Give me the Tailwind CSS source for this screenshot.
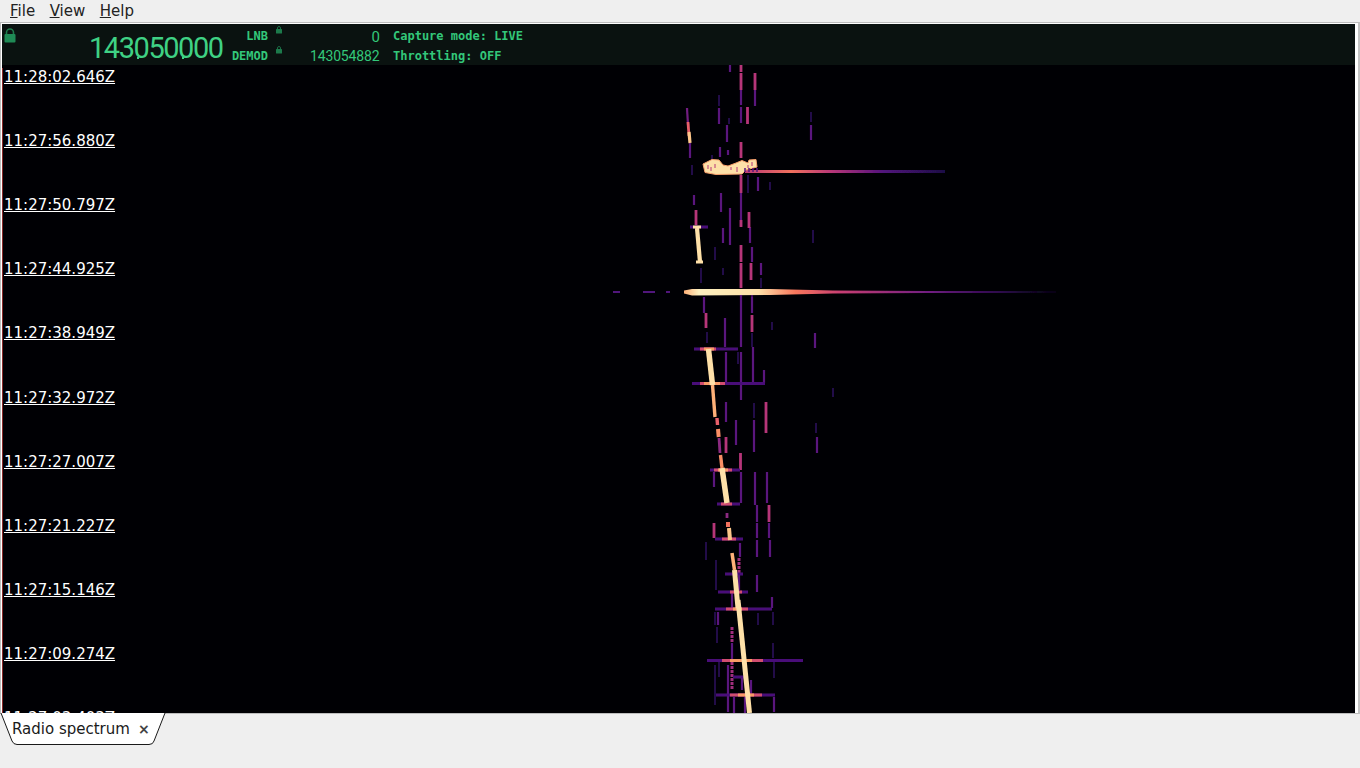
<!DOCTYPE html>
<html>
<head>
<meta charset="utf-8">
<script src="https://cdn.jsdelivr.net/npm/@tailwindcss/browser@4"></script>
</head>
<body class="w-[1360px] h-[768px] overflow-hidden bg-[#efefef] font-['DejaVu_Sans',sans-serif] text-[#1a1a1a]">
<div class="flex flex-col h-[768px]">
  <nav class="flex h-[22px] shrink-0 items-center gap-[14.500px] pl-[10px] text-[15px] leading-[20px] text-[#222]">
    <span><u>F</u>ile</span><span><u>V</u>iew</span><span><u>H</u>elp</span>
  </nav>
  <main class="flex flex-col h-[692px] shrink-0 border-t border-t-[#bdbdbd] border-r-2 border-r-[#c4c4c4] border-l border-l-[#bdbdbd] border-b border-b-[#bdbdbd] bg-white pt-px pl-px pr-[3px]">
    <header class="relative flex h-[41px] shrink-0 bg-[#0a1210] text-[#33c77a] font-['DejaVu_Sans_Mono',monospace] font-bold text-[12px]">
      <svg class="absolute left-[2px] top-[4px]" width="12" height="15" viewBox="0 0 12 15"><path d="M2.500 7V4.500a3.500 3.500 0 0 1 7 0V7" fill="none" stroke="#1f7a4c" stroke-width="1.600"/><rect x="0.500" y="6" width="11" height="8.500" rx="1" fill="#1f8a55"/></svg>
      <span class="absolute left-[87px] top-[9px] font-['Roboto',sans-serif] font-normal text-[29px] leading-[30px] tracking-[-1.450px] text-[#3fd184]">143050000</span>
      <span class="absolute left-[135px] top-[33px] h-[2px] w-[2px] bg-[#3fd184]"></span>
      <span class="absolute left-[180px] top-[33px] h-[2px] w-[2px] bg-[#3fd184]"></span>
      <span class="absolute right-[1087px] top-[5px] leading-[15px]">LNB</span>
      <span class="absolute right-[1087px] top-[25px] leading-[15px]">DEMOD</span>
      <svg class="absolute left-[274px] top-[2px]" width="6" height="8" viewBox="0 0 6 8"><path d="M1.500 3.500V2a1.500 1.500 0 0 1 3 0v1.500" fill="none" stroke="#1c6b45"/><rect y="3" width="6" height="4.500" rx="0.500" fill="#1c7a4b"/></svg>
      <svg class="absolute left-[274px] top-[22px]" width="6" height="8" viewBox="0 0 6 8"><path d="M1.500 3.500V2a1.500 1.500 0 0 1 3 0v1.500" fill="none" stroke="#1c6b45"/><rect y="3" width="6" height="4.500" rx="0.500" fill="#1c7a4b"/></svg>
      <span class="absolute right-[975px] top-[5px] font-['Roboto',sans-serif] font-normal text-[15px] leading-[17px]">0</span>
      <span class="absolute left-[308px] top-[24px] font-['Roboto',sans-serif] font-normal text-[14px] leading-[17px] tracking-[-0.150px]">143054882</span>
      <span class="absolute left-[391px] top-[5px] leading-[15px]">Capture mode: LIVE</span>
      <span class="absolute left-[391px] top-[25px] leading-[15px]">Throttling: OFF</span>
    </header>
    <section class="relative h-[648px] overflow-hidden bg-[#000004]">
      <svg class="absolute left-0 top-0" width="1352" height="648" viewBox="2 65 1352 648" fill="none">
        <defs>
          <filter id="b" filterUnits="userSpaceOnUse" x="0" y="0" width="1360" height="768"><feGaussianBlur stdDeviation="0.750"/></filter>
          <linearGradient id="h1" gradientUnits="userSpaceOnUse" x1="684" x2="1056" y1="0" y2="0">
            <stop offset="0" stop-color="#feb078"/><stop offset="0.040" stop-color="#fdf0c0"/><stop offset="0.200" stop-color="#fee0a8"/><stop offset="0.300" stop-color="#f8765c"/><stop offset="0.420" stop-color="#c83e73"/><stop offset="0.650" stop-color="#721f81"/><stop offset="0.850" stop-color="#4a1079"/><stop offset="1" stop-color="#1d1147"/>
          </linearGradient>
          <linearGradient id="h2" gradientUnits="userSpaceOnUse" x1="740" x2="945" y1="0" y2="0">
            <stop offset="0" stop-color="#b63679"/><stop offset="0.250" stop-color="#f1705d"/><stop offset="0.450" stop-color="#b63679"/><stop offset="0.700" stop-color="#51127c"/><stop offset="1" stop-color="#1d1147"/>
          </linearGradient>
        </defs>
        <g filter="url(#b)">
          <path stroke="#2c115f" stroke-width="1.500" d="M719 95V106M729 118V124M712 155V160M692 165V175M701 268V283M715 247V260M723 268V275M761 278V288M813 230V243M772 322V330M707 332V343M752 333V347M738 352V364M833 388V397M770 182V190M748 175V193M811 112V122M706 542V560M716 560V590M715 612V625M717 627V643M719 662V677M715 665V705M758 613V625M773 612V625M773 643V658M774 662V678M741 198V206M816 423V433M754 403V418"/>
          <path stroke="#5a167e" stroke-width="2.200" d="M730 65V72M741 90V105M741 107V123M755 90V106M719 108V124M727 125V142M720 147V157M728 150V155M811 125V140M690 143V158M694 195V205M741 193V226M758 177V191M721 193V212M730 208V228M750 227V243M723 228V243M730 220V245M752 247V262M761 263V275M704 297V313M725 318V347M741 295V347M752 297V313M815 333V348M741 352V395M726 352V383M753 347V383M764 370V383M741 384V400M726 402V422M741 390V400M736 420V445M714 472V487M741 472V503M754 420V452M755 472V505M757 505V522M757 523V538M757 540V557M767 472V503M769 523V538M770 540V555M817 437V453M740 543V557M757 550V557M770 550V557M757 575V592M772 597V608M732 593V608M732 643V660M734 697V713M718 612V625M742 677V690M774 697V712M739 575V590M745 697V713M728 665V712M751 680V695"/>
          <path stroke="#b63679" stroke-width="2.800" d="M741 65V72M741 73V90M755 73V90M747.500 107V124M741 142V158M741 175V193M749 212V228M696 210V225M741 220V227M749 220V227M741 245V262M741 263V278M741 278V288M751 263V280M752 315V332M706 313V328M726 437V453M740.500 453V470M766 402V433M769 505V522M714 523V538"/>
          <path stroke="#a02f7c" stroke-width="3" stroke-dasharray="3 1" d="M739 558V573M732 627V642M732 662V690"/>
          <path stroke="#4a1079" stroke-width="2.800" d="M690 227H708M694 349H723M723 349H738M692 383.500H765M710 470H740M717 504H740M715 539H743M725 574H743M718 592H748M715 609H772M707 660.500H803M716 695H775M733 677H747"/>
          <path stroke="#d14e6f" stroke-width="2.800" d="M700 349H716M700 383.500H725M714 470H732M721 504H732M722 539H736M730 592H742M726 609H748M722 660.500H763M730 695H762"/>
          <path stroke="#f79a66" stroke-width="2.800" d="M704 349H714M704 383.500H720M718 470H728M733 609H742M730 660.500H752M738 695H754"/>
          <path stroke="#721f81" stroke-width="2.200" d="M687 108L688 125"/>
          <path stroke="#e85e6a" stroke-width="2.800" d="M688 122L689 136"/>
          <path stroke="#fdc78a" stroke-width="3.200" d="M689 132L690 143"/>
          <path stroke="#fee0a8" stroke-width="4.200" d="M697 228L700 262"/>
          <path stroke="#fee0a8" stroke-width="3" d="M693 227H701M696 262H703"/>
          <path stroke="#feb078" stroke-width="3.400" d="M712.500 385L715 417"/>
          <path stroke="#e85e6a" stroke-width="3.400" d="M717 418L717.500 425"/>
          <path stroke="#f98e65" stroke-width="4" d="M718 429L718.700 437"/>
          <path stroke="#8c2981" stroke-width="2.800" d="M719 438L720 453"/>
          <path stroke="#f98e65" stroke-width="3.400" d="M720.500 455L722 468"/>
          <path stroke="#fee0a8" stroke-width="5.500" d="M708.500 349L712.500 385"/>
          <path stroke="#fee0a8" stroke-width="5.500" d="M722 468L727 503"/>
          <path stroke="#8c2981" stroke-width="2.800" d="M727 513V518"/>
          <path stroke="#f1705d" stroke-width="4" d="M728 522V527"/>
          <path stroke="#fdc78a" stroke-width="4" d="M729 528L730 540"/>
          <path stroke="#feb078" stroke-width="3.500" d="M732 553L734.500 570"/>
          <path stroke="#fee0a8" stroke-width="5" d="M734.500 570L738 608"/>
          <path stroke="#fee0a8" stroke-width="5" d="M738 600L749.500 713"/>
          <path fill="url(#h1)" d="M684 290.500L692 289L770 289L833 290.500L1056 291.700V292.300L833 293.500L770 295L692 295.500L684 293.500Z"/>
          <path stroke="#51127c" stroke-width="1.800" d="M613 292H620M643 292H655M666 292H670"/>
          <path stroke="url(#h2)" stroke-width="2.800" d="M745 171.500H945"/>
          <path fill="#fde0a8" stroke="#f8a06c" stroke-width="1" d="M703 164L712 159.500L719 160L723 165L728 166L736 163L742 160.500L748 163L749 160L756 159.500L757 167L746 170L742 174L716 174.500L705 172.500Z"/>
          <path stroke="#b63679" stroke-width="1" d="M708 165V169M711 167V171M715 164V168M731 167V170M737 167V172M748 165V168M752 162V166"/>
          <path stroke="#5a167e" stroke-width="1.500" d="M745 168V172M749 168V172M753 168V172M757 168V172M741 295V301M752 295V301"/>
        </g>
      </svg>
      <div class="absolute left-0 top-[3px] h-[646px] w-px bg-[#8a2a2a]"></div>
      <div class="relative flex flex-col pl-[2px] pt-[2.050px] text-[15px] leading-[20px] text-white">
        <div class="h-[64.100px] shrink-0 underline">11:28:02.646Z</div>
        <div class="h-[64.100px] shrink-0 underline">11:27:56.880Z</div>
        <div class="h-[64.100px] shrink-0 underline">11:27:50.797Z</div>
        <div class="h-[64.100px] shrink-0 underline">11:27:44.925Z</div>
        <div class="h-[64.100px] shrink-0 underline">11:27:38.949Z</div>
        <div class="h-[64.100px] shrink-0 underline">11:27:32.972Z</div>
        <div class="h-[64.100px] shrink-0 underline">11:27:27.007Z</div>
        <div class="h-[64.100px] shrink-0 underline">11:27:21.227Z</div>
        <div class="h-[64.100px] shrink-0 underline">11:27:15.146Z</div>
        <div class="h-[64.100px] shrink-0 underline">11:27:09.274Z</div>
        <div class="h-[64.100px] shrink-0 underline">11:27:03.403Z</div>
      </div>
    </section>
  </main>
  <footer class="relative h-[54px]">
    <svg class="absolute left-0 -top-px" width="170" height="34" viewBox="0 0 170 34"><path d="M1 0L12 28Q13.500 31.500 17 31.500H149Q153 31.500 154 28L165 0" fill="#fff" stroke="#1a1a1a" stroke-width="1"/></svg>
    <div class="absolute left-[12px] top-[4px] flex items-center text-[15px] leading-[22px] text-[#1a1a1a]">
      <span>Radio spectrum</span>
      <span class="ml-[8px] text-[14px] font-bold text-[#444]">×</span>
    </div>
  </footer>
</div>
</body>
</html>
